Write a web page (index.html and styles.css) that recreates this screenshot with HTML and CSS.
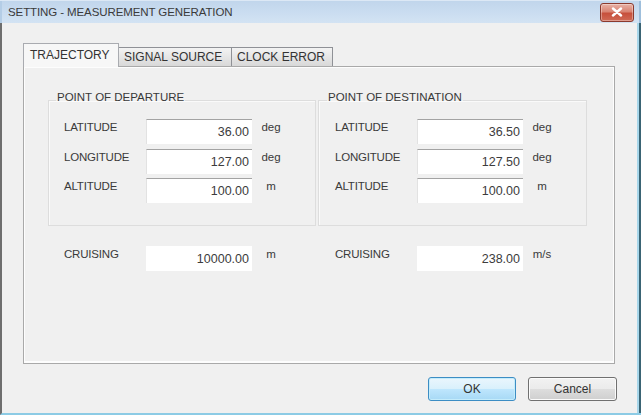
FILE: index.html
```html
<!DOCTYPE html>
<html>
<head>
<meta charset="utf-8">
<title>SETTING - MEASUREMENT GENERATION</title>
<link rel="stylesheet" href="styles.css">
</head>
<body>
<div class="window">
  <div class="titlebar">
    <span class="title">SETTING - MEASUREMENT GENERATION</span>
    <button class="close" aria-label="Close">
      <svg width="12" height="10" viewBox="0 0 12 10"><path d="M2 1.5 L10 8.5 M10 1.5 L2 8.5" stroke="#fff" stroke-width="2.4" stroke-linecap="round"/></svg>
    </button>
  </div>
  <div class="client">
    <div class="tabs">
      <div class="tab tab-1 active">TRAJECTORY</div>
      <div class="tab tab-2">SIGNAL SOURCE</div>
      <div class="tab tab-3">CLOCK ERROR</div>
    </div>
    <div class="panel">
      <div class="groups">
        <fieldset class="group group-left">
          <legend>POINT OF DEPARTURE</legend>
          <div class="row"><span class="lbl">LATITUDE</span><span class="field">36.00</span><span class="unit">deg</span></div>
          <div class="row"><span class="lbl">LONGITUDE</span><span class="field">127.00</span><span class="unit">deg</span></div>
          <div class="row"><span class="lbl">ALTITUDE</span><span class="field">100.00</span><span class="unit">m</span></div>
        </fieldset>
        <fieldset class="group group-right">
          <legend>POINT OF DESTINATION</legend>
          <div class="row"><span class="lbl">LATITUDE</span><span class="field">36.50</span><span class="unit">deg</span></div>
          <div class="row"><span class="lbl">LONGITUDE</span><span class="field">127.50</span><span class="unit">deg</span></div>
          <div class="row"><span class="lbl">ALTITUDE</span><span class="field">100.00</span><span class="unit">m</span></div>
        </fieldset>
      </div>
      <div class="cruise">
        <div class="row cruise-row"><span class="lbl">CRUISING</span><span class="field">10000.00</span><span class="unit">m</span></div>
        <div class="row cruise-row"><span class="lbl">CRUISING</span><span class="field">238.00</span><span class="unit">m/s</span></div>
      </div>
    </div>
    <div class="buttons">
      <button class="btn btn-ok">OK</button>
      <button class="btn btn-cancel">Cancel</button>
    </div>
  </div>
</div>
</body>
</html>
```

FILE: styles.css
```css
html, body {
  margin: 0;
  padding: 0;
}
body {
  width: 641px;
  height: 415px;
  overflow: hidden;
  background: #f0f0f0;
  font-family: "Liberation Sans", Arial, sans-serif;
  font-size: 12px;
  color: #363636;
}
.window {
  width: 641px;
  height: 415px;
  display: flex;
  flex-direction: column;
}
.titlebar {
  height: 23px;
  flex: none;
  display: flex;
  align-items: center;
  justify-content: space-between;
  padding: 0 7px 0 8px;
  background: linear-gradient(#c0d5eb, #c9dcf0 50%, #d3e3f3);
  box-shadow: inset 0 1px #dce8f5, inset 2px 0 #b4cde6, inset -2px 0 #9fbfdc;
}
.title {
  font-size: 11.5px;
  color: #3a3a3a;
  letter-spacing: -0.1px;
}
.close {
  width: 34px;
  height: 19px;
  padding: 0;
  margin-top: 1px;
  border: 1px solid #8b3a2e;
  border-radius: 3px;
  background: linear-gradient(#e8b2a6, #d98473 45%, #c7503c 55%, #d06a55);
  box-shadow: inset 0 0 0 1px rgba(255, 255, 255, 0.35);
  display: flex;
  align-items: center;
  justify-content: center;
}
.client {
  flex: 1;
  display: flex;
  flex-direction: column;
  border-left: 2px solid #6e6e6e;
  border-bottom: 2px solid #8ccbe5;
  box-shadow: inset -2px 0 #3a6474, inset -4px 0 #a7d6ea;
  padding: 20px 24px 0 21px;
}
.tabs {
  display: flex;
  align-items: flex-end;
  height: 23px;
}
.tab {
  box-sizing: border-box;
  height: 19px;
  border: 1px solid #8f9196;
  border-bottom: none;
  background: linear-gradient(#f3f3f3, #e6e6e6 50%, #d8d8d8);
  line-height: 18px;
  padding-left: 5px;
  margin-left: -1px;
  white-space: nowrap;
  color: #333;
}
.tab-1 {
  width: 96px;
  margin-left: 0;
  padding-left: 6px;
}
.tab-2 { width: 114px; }
.tab-3 { width: 102px; }
.tab.active {
  height: 24px;
  margin-bottom: -1px;
  line-height: 22px;
  background: #f7f7f7;
  position: relative;
  z-index: 1;
  border-color: #a9abb0;
}
.panel {
  box-sizing: border-box;
  width: 592px;
  height: 298px;
  border: 1px solid #a9a9a9;
  box-shadow: inset 1px 1px #fdfdfd, inset -1px -2px #fdfdfd;
  background: #f0f0f0;
  padding: 23px 0 0 24px;
}
.groups {
  display: flex;
  gap: 2px;
}
.group {
  box-sizing: border-box;
  margin: 0;
  min-width: 0;
  border: 1px solid #dddddd;
  box-shadow: inset 1px 1px #fafafa;
  padding: 9px 0 22px 15px;
  display: flex;
  flex-direction: column;
  gap: 4.5px;
}
.group-left { width: 268px; }
.group-right { width: 269px; padding-left: 16px; }
.group legend {
  padding: 0 1px 6px 1px;
  margin-left: -8px;
  line-height: 14px;
  font-size: 11.5px;
  color: #383838;
}
.row {
  display: flex;
  align-items: flex-start;
  height: 25px;
}
.lbl {
  width: 82px;
  line-height: 16px;
  font-size: 11.5px;
  letter-spacing: -0.2px;
  color: #3a3a3a;
}
.field {
  box-sizing: border-box;
  width: 106px;
  height: 25px;
  background: #fff;
  border-top: 1px solid #a3a3a3;
  border-left: 1px solid #e2e2e2;
  padding-right: 3px;
  text-align: right;
  line-height: 23px;
  padding-top: 1px;
  font-size: 12.5px;
  color: #3c3c3c;
}
.unit {
  width: 30px;
  margin-left: 4px;
  text-align: center;
  line-height: 16px;
  font-size: 11.5px;
  color: #3a3a3a;
}
.cruise {
  display: flex;
  margin-top: 20px;
  padding-left: 16px;
}
.cruise-row {
  width: 271px;
}
.cruise-row .field {
  border-top: none;
  border-left: none;
  line-height: 24px;
}
.buttons {
  display: flex;
  justify-content: flex-end;
  gap: 12px;
  margin-top: 13px;
}
.btn {
  box-sizing: border-box;
  width: 88px;
  height: 24px;
  padding: 0;
  border-radius: 3px;
  font-family: "Liberation Sans", Arial, sans-serif;
  font-size: 12px;
  color: #333;
}
.btn-ok {
  border: 1px solid #3c8dc4;
  background: linear-gradient(#eaf6fd, #d9f0fc 50%, #bee6fd 51%, #a7d9f5);
  box-shadow: inset 0 0 0 1px #c4ecfb;
}
.btn-cancel {
  width: 89px;
  border: 1px solid #707070;
  background: linear-gradient(#f2f2f2, #ebebeb 50%, #dddddd 51%, #cfcfcf);
  box-shadow: inset 0 0 0 1px #fbfbfb;
}
```
